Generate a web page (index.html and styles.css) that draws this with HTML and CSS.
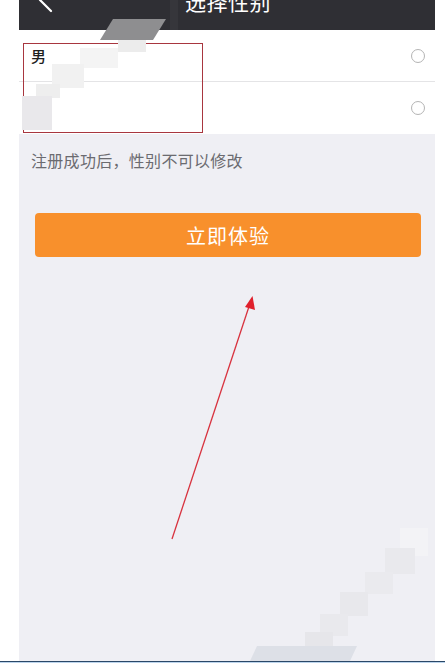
FILE: index.html
```html
<!DOCTYPE html>
<html lang="zh">
<head>
<meta charset="utf-8">
<link rel="stylesheet" href="styles.css">
</head>
<body>
<div class="phone">
  <header class="nav">
    <svg class="back" width="20" height="30" viewBox="0 0 20 30">
      <polyline points="13,-11 2,0 13,11" fill="none" stroke="#ffffff" stroke-width="2.2" stroke-linecap="round" stroke-linejoin="round"/>
    </svg>
    <div class="title">选择性别</div>
  </header>
  <div class="list">
    <div class="row"><span class="label">男</span><span class="radio"></span></div>
    <div class="row"><span class="label"></span><span class="radio"></span></div>
  </div>
  <p class="note">注册成功后，性别不可以修改</p>
  <div class="btn">立即体验</div>

  <div class="mark"></div>
  <svg class="overlay" width="416" height="661" viewBox="19 0 416 661">
    <g class="mosaic">
      <rect x="170" y="0" width="8" height="30" fill="#36363b"/>
      <polygon points="113,19 166,19 153,40 100,40" fill="#8e8e90"/>
      <rect x="118" y="40" width="28" height="12" fill="#ececec"/>
      <rect x="80" y="48" width="38" height="20" fill="#f4f4f4"/>
      <rect x="52" y="64" width="32" height="24" fill="#f1f1f1"/>
      <rect x="36" y="84" width="24" height="14" fill="#eeeeee"/>
      <rect x="22" y="96" width="30" height="34" fill="#e9e8eb"/>
      <rect x="400" y="528" width="28" height="28" fill="#f3f3f6"/>
      <rect x="385" y="548" width="30" height="26" fill="#e9e9ed"/>
      <rect x="365" y="572" width="28" height="22" fill="#eaeaee"/>
      <rect x="340" y="592" width="28" height="24" fill="#e8e8ec"/>
      <rect x="320" y="614" width="28" height="22" fill="#e9e9ed"/>
      <rect x="305" y="632" width="28" height="16" fill="#e6e6ea"/>
      <polygon points="257,646 357,646 350,661 250,661" fill="#dde0e7"/>
    </g>
    <line x1="172" y1="539" x2="249.5" y2="305" stroke="#d8323e" stroke-width="1.3"/>
    <polygon points="252.5,296 255,310 245,307" fill="#e0202c"/>
  </svg>
</div>
<div class="bottom"></div>
</body>
</html>
```
FILE: styles.css
```css
html, body {
  margin: 0;
  padding: 0;
  background: #ffffff;
  font-family: "Noto Sans CJK SC", "Noto Sans", sans-serif;
}

.phone {
  position: relative;
  margin-left: 19px;
  width: 416px;
  height: 661px;
  background: #efeff4;
  overflow: hidden;
}

.nav {
  height: 30px;
  background: #2f2f34;
  position: relative;
  display: flex;
  justify-content: center;
  overflow: hidden;
}

.back {
  position: absolute;
  left: 19px;
  top: 0;
}

.title {
  color: #ffffff;
  font-size: 21px;
  line-height: 22px;
  margin-top: -10px;
  letter-spacing: 0.5px;
  padding-left: 2px;
}

.list {
  background: #ffffff;
}

.row {
  height: 51px;
  display: flex;
  align-items: center;
  justify-content: space-between;
  padding: 0 10px 0 12px;
  border-bottom: 1px solid #e4e4e6;
}

.row:last-child {
  border-bottom: none;
  height: 52px;
}

.label {
  font-size: 15px;
  font-weight: 500;
  color: #1e1e1e;
  margin-top: -1px;
}

.radio {
  width: 12px;
  height: 12px;
  border: 1.3px solid #b4b4b4;
  border-radius: 50%;
}

.note {
  margin: 15px 0 0 0;
  padding-left: 12px;
  font-size: 16px;
  line-height: 22px;
  color: #6b6b70;
  letter-spacing: 0.3px;
}

.btn {
  margin: 42px 14px 0 16px;
  height: 44px;
  background: #f8902c;
  border-radius: 4px;
  color: #ffffff;
  font-size: 20px;
  display: flex;
  align-items: center;
  justify-content: center;
  letter-spacing: 1px;
}

.mark {
  position: absolute;
  left: 4px;
  top: 43px;
  width: 178px;
  height: 88px;
  border: 1px solid #a8363f;
}

.overlay {
  position: absolute;
  left: 0;
  top: 0;
}

.bottom {
  height: 2px;
  border-top: 1px solid #2a4868;
  background: #bcd4ec;
}
```
